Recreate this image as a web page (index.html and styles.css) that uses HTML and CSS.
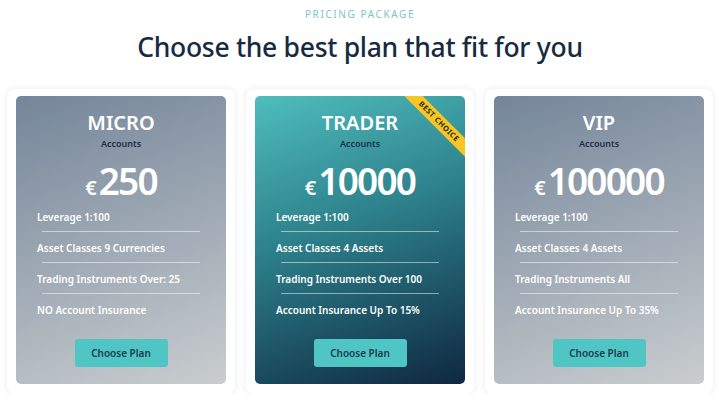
FILE: index.html
```html
<!DOCTYPE html>
<html lang="en">
<head>
<meta charset="utf-8">
<title>Pricing</title>
<link rel="stylesheet" href="styles.css">
</head>
<body>
<section class="pricing">
  <p class="eyebrow">PRICING PACKAGE</p>
  <h1 class="heading">Choose the best plan that fit for you</h1>
  <div class="plans">
    <div class="plan-wrap">
      <div class="plan plan-grey">
        <div class="plan-name">MICRO</div>
        <div class="plan-sub">Accounts</div>
        <div class="price"><span class="cur">€</span>250</div>
        <ul class="features">
          <li>Leverage 1:100</li>
          <li>Asset Classes 9 Currencies</li>
          <li>Trading Instruments Over: 25</li>
          <li>NO Account Insurance</li>
        </ul>
        <button class="btn">Choose Plan</button>
      </div>
    </div>
    <div class="plan-wrap">
      <div class="plan plan-teal">
        <div class="ribbon">BEST CHOICE</div>
        <div class="plan-name">TRADER</div>
        <div class="plan-sub">Accounts</div>
        <div class="price"><span class="cur">€</span>10000</div>
        <ul class="features">
          <li>Leverage 1:100</li>
          <li>Asset Classes 4 Assets</li>
          <li>Trading Instruments Over 100</li>
          <li>Account Insurance Up To 15%</li>
        </ul>
        <button class="btn">Choose Plan</button>
      </div>
    </div>
    <div class="plan-wrap">
      <div class="plan plan-grey">
        <div class="plan-name">VIP</div>
        <div class="plan-sub">Accounts</div>
        <div class="price"><span class="cur">€</span>100000</div>
        <ul class="features">
          <li>Leverage 1:100</li>
          <li>Asset Classes 4 Assets</li>
          <li>Trading Instruments All</li>
          <li>Account Insurance Up To 35%</li>
        </ul>
        <button class="btn">Choose Plan</button>
      </div>
    </div>
  </div>
</section>
</body>
</html>
```
FILE: styles.css
```css
* { box-sizing: border-box; }
html, body { margin: 0; padding: 0; background: #ffffff; }
body {
  font-family: "Noto Sans", "Open Sans", sans-serif;
  color: #1b2a3f;
}
.pricing {
  padding: 7px 6px 0 7px;
}
.eyebrow {
  margin: 0;
  text-align: center;
  font-size: 10px;
  line-height: 14px;
  letter-spacing: 1.6px;
  color: #7cc4c6;
}
.heading {
  margin: 9px 0 0;
  text-align: center;
  font-size: 26.5px;
  line-height: 34px;
  font-weight: 500;
  color: #172a40;
  letter-spacing: -0.3px;
}
.plans {
  margin-top: 25px;
  display: grid;
  grid-template-columns: repeat(3, 228px);
  column-gap: 11px;
}
.plan-wrap {
  background: #ffffff;
  border-radius: 8px;
  padding: 7px 9px 10px;
  box-shadow: 0 0 6px rgba(30, 50, 70, 0.10);
}
.plan {
  position: relative;
  overflow: hidden;
  border-radius: 5px;
  padding: 16px 0 17px;
  display: flex;
  flex-direction: column;
  align-items: center;
  color: #ffffff;
}
.plan-grey {
  background: linear-gradient(160deg, #74869a 0%, #9aa5b1 45%, #c9cdcf 100%);
}
.plan-teal {
  background: linear-gradient(160deg, #4fbdbd 0%, #2c7f8a 45%, #0f2741 100%);
}
.plan-name {
  font-size: 20px;
  line-height: 22px;
  font-weight: 600;
}
.plan-sub {
  margin-top: 4px;
  font-size: 9px;
  line-height: 11px;
  font-weight: 600;
  color: #1c2f45;
}
.price {
  margin-top: 12px;
  height: 40px;
  font-size: 37px;
  line-height: 40px;
  font-weight: 600;
  letter-spacing: -1.8px;
}
.cur {
  font-size: 20px;
  line-height: 0;
  margin-right: 2px;
  letter-spacing: 0;
}
.features {
  list-style: none;
  margin: 0;
  padding: 0 21px;
  align-self: stretch;
}
.features li {
  padding: 9px 0 8px;
  font-size: 10px;
  line-height: 14px;
  font-weight: 600;
  background: linear-gradient(rgba(255, 255, 255, 0.5), rgba(255, 255, 255, 0.5)) no-repeat;
  background-size: calc(100% - 10px) 1px;
  background-position: 5px 100%;
}
.features li:last-child {
  background: none;
  padding-bottom: 7px;
}
.btn {
  margin-top: 15px;
  width: 93px;
  height: 28px;
  border: 0;
  border-radius: 3px;
  background: #4fc6c4;
  color: #1a3a4f;
  font-family: inherit;
  font-size: 10px;
  font-weight: 600;
}
.ribbon {
  position: absolute;
  top: 19px;
  right: -26px;
  width: 104px;
  height: 13px;
  line-height: 13px;
  background: #f6c623;
  color: #2a2a1e;
  font-size: 7.5px;
  font-weight: 700;
  text-align: center;
  letter-spacing: 0.5px;
  transform: rotate(45deg);
}
```
